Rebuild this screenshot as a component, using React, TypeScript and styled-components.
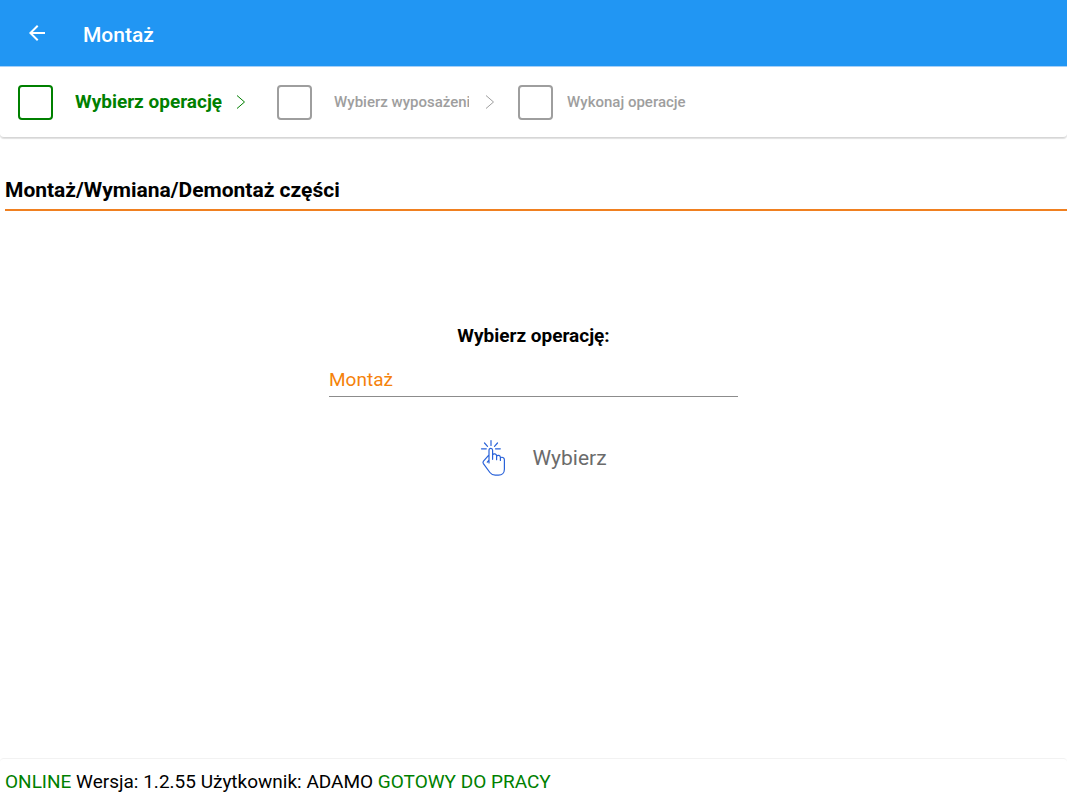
import React, { useState } from "react";
import styled, { createGlobalStyle } from "styled-components";

const GlobalStyle = createGlobalStyle`
  *, *::before, *::after { box-sizing: border-box; }
  body {
    margin: 0;
    background: #ffffff;
    color: #000000;
    font-family: Roboto, "Liberation Sans", sans-serif;
  }
`;

const Page = styled.div`
  display: flex;
  flex-direction: column;
  min-height: 100vh;
`;

const TopBar = styled.header`
  display: flex;
  align-items: center;
  gap: 34px;
  height: 66px;
  padding: 3px 25px 0;
  background: #2196f3;
  color: #ffffff;
`;

const BackButton = styled.button`
  display: flex;
  padding: 0 0 3px;
  border: 0;
  background: none;
  color: inherit;
  cursor: pointer;
`;

const Title = styled.h1`
  margin: 0;
  font-size: 21px;
  line-height: 24px;
  font-weight: 500;
`;

const Steps = styled.nav`
  display: flex;
  align-items: center;
  height: 72px;
  padding: 0 18px;
  border-top: 1px solid #a6d0f8;
  border-bottom: 1px solid #d6d6d6;
  border-radius: 0 0 4px 4px;
  box-shadow: 0 1px 1px #e0e0e0;
`;

const Step = styled.label<{ $active?: boolean; $gap: number }>`
  display: flex;
  align-items: center;
  gap: ${(p) => p.$gap}px;
  color: ${(p) => (p.$active ? "#008000" : "#9e9e9e")};
`;

const StepBox = styled.input`
  appearance: none;
  width: 35px;
  height: 35px;
  margin: 0;
  border: 2px solid currentColor;
  border-radius: 4px;
  color: inherit;
`;

const StepText = styled.span<{ $large?: boolean; $width?: number }>`
  width: ${(p) => (p.$width ? `${p.$width}px` : "auto")};
  overflow: hidden;
  white-space: nowrap;
  font-size: ${(p) => (p.$large ? 19 : 15)}px;
  line-height: 24px;
  font-weight: ${(p) => (p.$large ? 700 : 500)};
`;

const StepArrow = styled.svg<{ $active?: boolean }>`
  flex: none;
  width: 10px;
  height: 16px;
  margin: 0 ${(p) => (p.$active ? 31 : 23)}px 0 ${(p) => (p.$active ? 14 : 16)}px;
  fill: none;
  stroke: ${(p) => (p.$active ? "#008000" : "#9e9e9e")};
`;

const Main = styled.main`
  flex: 1;
  padding-top: 39px;
`;

const SectionTitle = styled.h2`
  margin: 0 0 0 5px;
  padding-bottom: 6px;
  border-bottom: 2px solid #f08020;
  font-size: 21px;
  line-height: 26px;
  font-weight: 700;
`;

const Form = styled.form`
  display: flex;
  flex-direction: column;
  align-items: center;
  padding-top: 113px;
`;

const FieldLabel = styled.label`
  font-size: 19px;
  line-height: 24px;
  font-weight: 700;
`;

const Picker = styled.select`
  appearance: none;
  width: 409px;
  max-width: 100%;
  height: 34px;
  margin-top: 15px;
  padding: 0;
  border: 0;
  border-bottom: 1px solid #8c8c8c;
  border-radius: 0;
  background: none;
  color: #f5820b;
  font-family: inherit;
  font-size: 19px;
`;

const ChooseButton = styled.button`
  display: flex;
  align-items: center;
  gap: 24px;
  margin-top: 42px;
  padding: 0 0 0 20px;
  border: 0;
  background: none;
  color: #6b6b6b;
  font-family: inherit;
  font-size: 21px;
  line-height: 24px;
  cursor: pointer;
`;

const StatusBar = styled.footer`
  height: 42px;
  padding: 11px 5px;
  border-top: 1px solid #f2f2f2;
  border-radius: 4px;
  font-size: 19px;
  line-height: 24px;
`;

const Good = styled.span`
  color: #008000;
`;

const Arrow = ({ active }: { active?: boolean }) => (
  <StepArrow $active={active} viewBox="0 0 10 16" aria-hidden="true">
    <path d="M1 1.5 8.5 8 1 14.5" />
  </StepArrow>
);

const TapIcon = () => (
  <svg width="28" height="38" viewBox="0 0 28 38" fill="none" stroke="#2962d9" strokeWidth="1.2" strokeLinecap="round" strokeLinejoin="round" aria-hidden="true">
    <path d="M11 1.5v5M4.5 4l3 3.3M17.5 4l-3 3.3M1.5 9.8h4.8M15.5 9.8h4.8" />
    <path d="M9 24V11.3c0-2.6 3.6-2.6 3.6 0v9M12.6 15.9c1-1.8 4-1.1 4 1v3.8M16.6 17.1c1.2-1.4 3.8-.8 3.8 1.3v3M20.4 18.7c1.5-1.1 4 0 4 2v9.6c0 3.4-2.5 5.8-5.8 5.8h-3.4c-2.2 0-4-.8-5.3-2.6L3.4 24.7c-.6-.9-.6-1.7.1-2.5L9 15.9M9 21l-1.7 2.2" />
  </svg>
);

export default function App() {
  const [operation, setOperation] = useState("Montaż");
  return (
    <Page>
      <GlobalStyle />
      <TopBar>
        <BackButton type="button" aria-label="Wstecz">
          <svg width="24" height="24" viewBox="0 0 24 24" fill="#ffffff" aria-hidden="true">
            <path d="M20 11H7.83l5.59-5.59L12 4l-8 8 8 8 1.41-1.41L7.83 13H20z" />
          </svg>
        </BackButton>
        <Title>Montaż</Title>
      </TopBar>
      <Steps>
        <Step $active $gap={22}>
          <StepBox type="checkbox" />
          <StepText $large>Wybierz operację</StepText>
        </Step>
        <Arrow active />
        <Step $gap={22}>
          <StepBox type="checkbox" />
          <StepText $width={135}>Wybierz wyposażenie</StepText>
        </Step>
        <Arrow />
        <Step $gap={14}>
          <StepBox type="checkbox" />
          <StepText>Wykonaj operacje</StepText>
        </Step>
      </Steps>
      <Main>
        <SectionTitle>Montaż/Wymiana/Demontaż części</SectionTitle>
        <Form onSubmit={(e) => e.preventDefault()}>
          <FieldLabel htmlFor="operation">Wybierz operację:</FieldLabel>
          <Picker id="operation" value={operation} onChange={(e) => setOperation(e.target.value)}>
            <option>Montaż</option>
            <option>Wymiana</option>
            <option>Demontaż</option>
          </Picker>
          <ChooseButton type="submit">
            <TapIcon />
            Wybierz
          </ChooseButton>
        </Form>
      </Main>
      <StatusBar>
        <Good>ONLINE</Good> Wersja: 1.2.55 Użytkownik: ADAMO <Good>GOTOWY DO PRACY</Good>
      </StatusBar>
    </Page>
  );
}
